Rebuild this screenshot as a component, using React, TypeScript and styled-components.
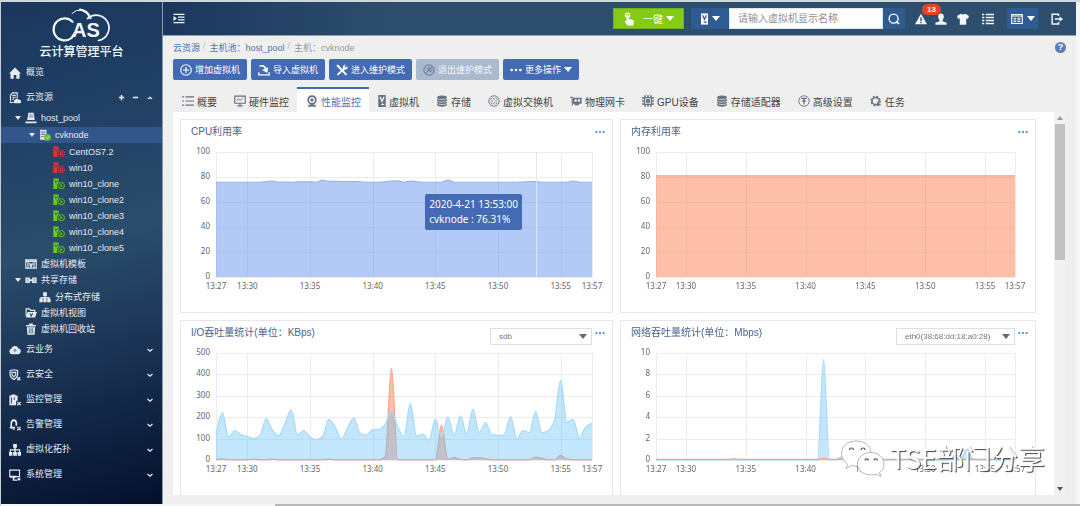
import React, { useLayoutEffect, useRef, useState } from "react";
import styled, { createGlobalStyle } from "styled-components";

const GlobalStyle = createGlobalStyle`
  * { box-sizing: border-box; }
  body {
    margin: 0;
    background: #f6f6f6;
    font-family: "Liberation Sans", "Noto Sans CJK SC", sans-serif;
    font-size: 9px;
    color: #444;
  }
  button, input, select { font-family: inherit; }
  a { text-decoration: none; color: inherit; }
  ul { list-style: none; margin: 0; padding: 0; }
`;

/* ---------- icons ---------- */

const Glyph = styled.svg<{ $w?: number; $h?: number }>`
  width: ${(p) => p.$w ?? 12}px;
  height: ${(p) => p.$h ?? p.$w ?? 12}px;
  flex: none;
  display: block;
`;

type IconName =
  | "home" | "resource" | "pool" | "host" | "template" | "storage" | "distributed" | "view" | "trash"
  | "cloud" | "shield" | "monitor" | "alarm" | "topology" | "system"
  | "collapse" | "touch" | "vm" | "search" | "warning" | "user" | "shirt" | "list" | "window" | "exit"
  | "plus" | "import" | "tools" | "forbid" | "dots"
  | "summary" | "hardware" | "camera" | "disk" | "vswitch" | "nic" | "gpu" | "advanced" | "task";

const line = { fill: "none", stroke: "currentColor", strokeWidth: 1.5 } as const;

const shapes: Record<IconName, React.ReactNode> = {
  home: <path fill="currentColor" d="M8 .5 16 8.600H14V15.500H9.800V10.500H6.200V15.500H2V8.600H0Z" />,
  resource: (
    <>
      <path {...line} d="M2 12.500V4L5 1.200H11V7.500M1 14H6M4.500 4.500H9M4.500 7H9M4.500 9.500H7" />
      <path fill="currentColor" d="M7.500 15A2.200 2.200 0 0 1 8 10.800A2.600 2.600 0 0 1 13 10.500A2.300 2.300 0 0 1 14.500 15Z" />
    </>
  ),
  pool: (
    <>
      <path fill="currentColor" d="M4.500 1H11.500L13 10.500H3ZM.500 12.500H15.500V15H.500Z" />
      <path stroke="#26486d" strokeWidth=".8" d="M5.500 4H10.500M5 6.500H11" />
    </>
  ),
  host: (
    <>
      <path fill="#d8e0e8" d="M1.500 1H10V14.500H1.500Z" />
      <path stroke="#46648c" strokeWidth="1.200" d="M3 4H8.500M3 7H8.500M3 10H6" />
      <circle cx="11.300" cy="11.300" r="4.500" fill="#6cc02a" />
      <path fill="none" stroke="#d9f2c4" strokeWidth="1.100" d="m9.300 11.300 1.500 1.500 2.500-3" />
    </>
  ),
  template: (
    <>
      <path {...line} d="M1 2.500H15V13.500H1ZM1 4.500H15M4 4.500V13M12 4.500V13" />
      <path {...line} strokeWidth="2" d="M6 7 8 11.500 10 7" />
    </>
  ),
  storage: (
    <>
      <path fill="currentColor" d="M.500 4.500H6.500V12H.500ZM9.500 4.500H15.500V12H9.500ZM6 7H10V9.500H6Z" />
      <path stroke="#4a6884" strokeWidth=".8" d="M2 7H5M11 7H14M2 9.500H5M11 9.500H14" />
    </>
  ),
  distributed: (
    <path fill="currentColor" d="M5.500 1.500H10.500V6.500H8.800V8H14V10H15.500V15H11V10H12V9.500H8.800V10H10.200V15H5.800V10H7.200V9.500H4V10H5V15H.500V10H2V8H7.200V6.500H5.500Z" />
  ),
  view: (
    <>
      <path {...line} d="M1.500 12V2.500H6L7.500 4.500H13V6.500" />
      <path fill="currentColor" d="M3.500 6.500H15.800L13.500 14H1.200Z" />
      <path fill="none" stroke="#27476a" strokeWidth="1.500" d="m6.500 8.500 1.700 3.500 2-3.500" />
    </>
  ),
  trash: (
    <>
      <path fill="currentColor" d="M5.500.500H10.500V2.500H14.500V4.500H1.500V2.500H5.500ZM2.500 5.500H13.500L12.800 15.500H3.200Z" />
      <path stroke="#27476a" d="M5.700 7V14M8 7V14M10.300 7V14" />
    </>
  ),
  cloud: (
    <>
      <path fill="currentColor" d="M3.800 13.500A3.700 3.700 0 0 1 3 6.300A5 5 0 0 1 12.500 5.800A3.900 3.900 0 0 1 12.500 13.500Z" />
      <path stroke="#2a4768" strokeWidth="1" fill="none" d="M6 9 8 7 10 9M8 7.500V11" />
    </>
  ),
  shield: (
    <>
      <path {...line} d="M1.500 2 6.500 1 11.500 2V7.500Q11 11.500 6.500 14Q2 11.500 1.500 7.500Z" />
      <path {...line} d="M4 4.500H9V7.500L6.500 10.500L4 7.500ZM11 11 15 15M15 11 11 15" />
    </>
  ),
  monitor: (
    <>
      <path fill="currentColor" d="M.500 2H3.500V.500H8.500V2H11.500V9H9.500V15H.500Z" />
      <path stroke="#1c3152" strokeWidth="1.200" d="M3.200 4.500V13M7 4.500V8" />
      <path {...line} d="m11 10.500 4.500 4.500M15.500 10.500 11 15" />
    </>
  ),
  alarm: (
    <>
      <path {...line} strokeWidth="2.200" d="M3 11V5.500Q3.500 1.800 6.500 1.500Q9.500 1.800 9.800 5.500V9M1 11.500H8" />
      <path {...line} d="M5 13.500H7.500M11 10.500 15.500 15M15.500 10.500 11 15" />
    </>
  ),
  topology: (
    <path fill="currentColor" d="M5.500 0H10.500V5H9V7H15V10.500H16V15.500H11.500V10.500H13.500V8.500H9V10.500H10.500V15.500H5.500V10.500H7V8.500H2.500V10.500H4.500V15.500H0V10.500H1V7H7V5H5.500Z" />
  ),
  system: (
    <>
      <path {...line} d="M1 1.500H14V10H1Z" />
      <path fill="currentColor" d="M1 9H10V11.500H7V14H11V15.500H5V11.500H1Z" />
      <path {...line} d="m11.500 11.500 3.500 3.500M15 11.500 11.500 15" />
    </>
  ),
  collapse: (
    <>
      <path stroke="currentColor" strokeWidth="2" d="M0 2H16M6.500 6H16M6.500 10H16M0 14H16" />
      <path fill="currentColor" d="M0 4.500 5 8 0 11.500Z" />
    </>
  ),
  touch: (
    <>
      <circle cx="5.500" cy="3.500" r="2.600" {...line} />
      <path fill="currentColor" d="M4.300 3.500Q5.500 2.300 6.700 3.500V8L12 9Q13.500 9.500 13.300 11L12.500 16H5.500L2 10.800Q2.300 9.500 4.300 10.800Z" />
    </>
  ),
  vm: (
    <>
      <path fill="currentColor" d="M3 0H13V16H3Z" />
      <path fill="none" stroke="var(--hole, #2f5b93)" strokeWidth="1.800" d="M5.300 2.500 8 8.500 10.700 2.500" />
      <path stroke="var(--hole, #2f5b93)" strokeWidth="1.800" d="M7 12.500H11" />
    </>
  ),
  search: (
    <>
      <circle cx="7.500" cy="7.500" r="6" {...line} strokeWidth="1.800" />
      <path {...line} strokeWidth="2.200" d="m10.500 11.500 4.500 3" />
    </>
  ),
  warning: (
    <>
      <path fill="currentColor" d="M8 1 16 15H0Z" />
      <path stroke="#2d4f6d" strokeWidth="1.800" d="M8 5.500V10.500M8 11.700V13.500" />
    </>
  ),
  user: (
    <path fill="currentColor" d="M8 .500Q12 .700 11.800 5Q11.500 8 10 9.500V11L15.500 13V15.500H.500V13L6 11V9.500Q4.500 8 4.200 5Q4 .700 8 .500Z" />
  ),
  shirt: <path fill="currentColor" d="M5 1Q8 3 11 1L16 4 14.500 8 12.300 7V15.500H3.700V7L1.500 8 0 4Z" />,
  list: (
    <path stroke="currentColor" strokeWidth="1.900" d="M0 2H3M5 2H16M0 6H3M5 6H16M0 10H3M5 10H16M0 14H3M5 14H16" />
  ),
  window: (
    <>
      <path {...line} d="M1 2H15V14H1ZM1 4H15" />
      <path stroke="currentColor" strokeWidth="1.300" d="M3.500 7H7M3.500 9.200H7M3.500 11.400H7M8.500 7H12.500M8.500 9.200H12.500M8.500 11.400H12.500" />
    </>
  ),
  exit: (
    <>
      <path {...line} strokeWidth="2" d="M10 4V1.500H1.500V14.500H10V12" />
      <path {...line} strokeWidth="2" d="M5 8H13" />
      <path fill="currentColor" d="M11.500 4.500 16 8 11.500 11.500Z" />
    </>
  ),
  plus: (
    <>
      <circle cx="8" cy="8" r="7" {...line} />
      <path {...line} d="M8 4V12M4 8H12" />
    </>
  ),
  import: (
    <>
      <path {...line} strokeWidth="1.800" d="M1 11V14.500H15V11" />
      <path {...line} strokeWidth="2.200" d="M2 3Q8 .500 10.500 7" />
      <path fill="currentColor" d="M5.500 8 13.500 4 12.500 12Z" />
    </>
  ),
  tools: (
    <>
      <path {...line} strokeWidth="2.600" d="M2 2 14 14.500M11 6 2 14.500" />
      <path fill="currentColor" d="M10 1.500 13 .500 11.500 3.500 13 4.500 15.500 2.500 15 6.500 11 7.500 9 5ZM.500 1.500 2.500 .500 5.500 4 3.500 5.500Z" />
    </>
  ),
  forbid: (
    <>
      <circle cx="8" cy="8" r="6.800" {...line} strokeWidth="1.800" />
      <path {...line} strokeWidth="1.800" d="M13 3 3 13M5 5.500 11 11M8 3V6M10.500 8H13" />
    </>
  ),
  dots: (
    <g fill="currentColor">
      <circle cx="2.200" cy="8" r="1.800" />
      <circle cx="8" cy="8" r="1.800" />
      <circle cx="13.800" cy="8" r="1.800" />
    </g>
  ),
  summary: <path stroke="currentColor" strokeWidth="1.400" d="M0 2.500H2.500M4.500 2.500H16M0 8H2.500M4.500 8H16M0 13.500H2.500M4.500 13.500H16" />,
  hardware: (
    <>
      <path {...line} d="M1 1.500H15V11H1ZM8 11V14.500M4.500 14.500H11.500" />
      <path {...line} strokeWidth="1.200" d="m3.500 7 2.500-2 2 2.500 4-4" />
    </>
  ),
  camera: (
    <>
      <circle cx="8" cy="6.500" r="5.100" fill="none" stroke="currentColor" strokeWidth="2.400" />
      <circle cx="8" cy="6.500" r="2.200" fill="currentColor" />
      <path fill="currentColor" d="M6 11H10V13H13V15.500H3V13H6Z" />
    </>
  ),
  disk: (
    <>
      <path fill="currentColor" d="M1.500 3.200Q1.500 .500 8 .500T14.500 3.200V12.800Q14.500 15.500 8 15.500T1.500 12.800Z" />
      <path fill="none" stroke="#efefef" strokeWidth=".9" d="M1.500 4.500Q3 6 8 6T14.500 4.500M1.500 8Q3 9.500 8 9.500T14.500 8M1.500 11.200Q3 12.700 8 12.700T14.500 11.200" />
    </>
  ),
  vswitch: (
    <>
      <circle cx="8" cy="8" r="7" {...line} strokeWidth="1.200" />
      <path {...line} strokeWidth="1.300" d="M3.500 6 6 3.500M10 3.500 12.500 6M3.500 10 6 12.500M10 12.500 12.500 10M4 8H6.500M9.500 8H12M8 4V6.500M8 9.500V12" />
    </>
  ),
  nic: (
    <>
      <path {...line} d="M0 3H3V14" />
      <path fill="currentColor" d="M4 3.500H15.500V11.500H12V13.500H6V11.500H4Z" />
      <path fill="#efefef" d="M6 5.500H9V9H6ZM10.500 5.500H13.500V9H10.500Z" />
    </>
  ),
  gpu: (
    <>
      <path stroke="currentColor" strokeWidth="1.800" d="M4 0V16M8 0V16M12 0V16M0 4H16M0 8H16M0 12H16" />
      <path {...line} fill="#efefef" d="M3.500 3.500H12.500V12.500H3.500Z" />
      <path fill="currentColor" d="M5.500 5.500H10.500V10.500H5.500Z" />
    </>
  ),
  advanced: (
    <>
      <circle cx="8" cy="8" r="7" {...line} strokeWidth="1.200" />
      <path {...line} d="M4.500 4.500H11.500M8 12.500V6" />
      <path fill="currentColor" d="M8 5 11 9H5Z" />
    </>
  ),
  task: (
    <>
      <circle cx="7.500" cy="8" r="4.800" fill="none" stroke="currentColor" strokeWidth="2" />
      <circle cx="7.500" cy="8" r="6.200" fill="none" stroke="currentColor" strokeWidth="1.600" strokeDasharray="2.800 2.070" />
      <path fill="currentColor" d="M9 8.500 15.500 13.500 12 13.500 10.500 16Z" />
    </>
  ),
};

const Icon = ({ name, w, h }: { name: IconName; w?: number; h?: number }) => (
  <Glyph viewBox={name === "vm" ? "3 0 10 16" : "0 0 16 16"} $w={w} $h={h} aria-hidden="true">
    {shapes[name]}
  </Glyph>
);

const VmIcon = ({ running }: { running: boolean }) => {
  const c = running ? "#62cf22" : "#e8303c";
  return (
    <Glyph viewBox="0 0 16 16" aria-hidden="true">
      <path fill={c} d="M.500 .500H7.500V6L5.500 8.500V14.500H.500Z" />
      <path fill="none" stroke="#26486d" d="M2.500 3 4 6.500 5.700 3" />
      <circle cx="11.200" cy="10.200" r="4.100" fill="none" stroke={c} strokeWidth="1.300" />
      {running ? <path fill={c} d="m9.900 8 3.300 2.200-3.300 2.200Z" /> : <path fill={c} d="M9.400 8.400H13V12H9.400Z" />}
    </Glyph>
  );
};

const Caret = styled.span<{ $size?: number }>`
  flex: none;
  width: 0;
  height: 0;
  border: ${(p) => p.$size ?? 4}px solid transparent;
  border-top-color: currentColor;
  border-top-width: ${(p) => (p.$size ?? 4) + 1}px;
  border-bottom: 0;
`;

/* ---------- shell ---------- */

const Shell = styled.div`
  position: relative;
  height: 100vh;
  display: flex;
  flex-direction: column;
  overflow: hidden;
  border-top: 2px solid #cdd7dd;
  border-left: 1px solid #c5ccd6;
`;

const Frame = styled.div`
  flex: 1;
  min-height: 0;
  display: flex;
  margin-right: 4px;
`;

const BottomEdge = styled.div`
  height: 2px;
  margin-left: 274px;
  background: #b9b9b9;
`;

const Sidebar = styled.aside`
  width: 162px;
  flex: none;
  overflow: hidden;
  color: #e6ebf2;
  border-right: 1px solid #8a9bb0;
  background: linear-gradient(165deg, #1b375e 0%, #1f3e63 20%, #2a4d6c 48%, #1c3557 68%, #03102c 100%);
`;

const Brand = styled.div`
  height: 58px;
  display: flex;
  flex-direction: column;
  align-items: center;
  padding-top: 6px;
  color: #f4f7fb;
  font-size: 12px;
  font-weight: 500;
  line-height: 16px;
`;

const MenuRow = styled.div`
  height: 25px;
  display: flex;
  align-items: center;
  padding: 0 8px;
  gap: 5px;
`;

const MenuLink = styled.a`
  flex: 1;
  display: flex;
  align-items: center;
  gap: 5px;
  line-height: 13px;
`;

const TreeTool = styled.button`
  width: 9px;
  height: 12px;
  border: 0;
  padding: 0;
  background: none;
  color: inherit;
  display: flex;
  align-items: center;
  justify-content: center;
`;

const Tree = styled.ul`
  & ul { padding-top: 1px; }
`;

const TreeLink = styled.a<{ $depth: number; $active?: boolean }>`
  height: 16px;
  display: flex;
  align-items: center;
  gap: 3px;
  padding-left: ${(p) => 13 + p.$depth * 14}px;
  background: ${(p) => (p.$active ? "#33568a" : "transparent")};
`;

const TreeLabel = styled.span`
  padding-left: 1px;
  line-height: 14px;
`;

const Twist = styled.span`
  width: 8px;
  display: flex;
  justify-content: center;
`;

const Chevron = ({ up }: { up?: boolean }) => (
  <Glyph viewBox="0 0 8 8" $w={8} aria-hidden="true">
    <path fill="none" stroke="currentColor" strokeWidth="1.200" d={up ? "M2 5 4 3.200 6 5" : "M1.500 3 4 5.200 6.500 3"} />
  </Glyph>
);

type Node = {
  label: string;
  icon: React.ReactNode;
  active?: boolean;
  children?: Node[];
};

const vm = (label: string, running: boolean): Node => ({ label, icon: <VmIcon running={running} /> });

const tree: Node[] = [
  {
    label: "host_pool",
    icon: <Icon name="pool" />,
    children: [
      {
        label: "cvknode",
        icon: <Icon name="host" />,
        active: true,
        children: [
          vm("CentOS7.2", false),
          vm("win10", false),
          vm("win10_clone", true),
          vm("win10_clone2", true),
          vm("win10_clone3", true),
          vm("win10_clone4", true),
          vm("win10_clone5", true),
        ],
      },
    ],
  },
  { label: "虚拟机模板", icon: <Icon name="template" /> },
  {
    label: "共享存储",
    icon: <Icon name="storage" />,
    children: [{ label: "分布式存储", icon: <Icon name="distributed" /> }],
  },
  { label: "虚拟机视图", icon: <Icon name="view" /> },
  { label: "虚拟机回收站", icon: <Icon name="trash" /> },
];

const TreeBranch = ({ nodes, depth = 0 }: { nodes: Node[]; depth?: number }) => (
  <>
    {nodes.map((n) => (
      <li key={n.label}>
        <TreeLink href="#" $depth={depth} $active={n.active}>
          <Twist>{n.children && <Caret $size={3} />}</Twist>
          {n.icon}
          <TreeLabel>{n.label}</TreeLabel>
        </TreeLink>
        {n.children && (
          <ul>
            <TreeBranch nodes={n.children} depth={depth + 1} />
          </ul>
        )}
      </li>
    ))}
  </>
);

const lowerMenu: { label: string; icon: IconName }[] = [
  { label: "云业务", icon: "cloud" },
  { label: "云安全", icon: "shield" },
  { label: "监控管理", icon: "monitor" },
  { label: "告警管理", icon: "alarm" },
  { label: "虚拟化拓扑", icon: "topology" },
  { label: "系统管理", icon: "system" },
];

const Logo = () => (
  <svg width="60" height="36" viewBox="0 0 60 36" aria-label="CAS">
    <g fill="none" stroke="#f4f7fb" strokeLinecap="round">
      <path strokeWidth="2.200" d="M20.500 13.800A11 11 0 1 0 19.500 30L23 25" />
      <path strokeWidth="1" d="M20 5.500Q29-3.500 38.500 10" />
      <path strokeWidth="2.200" d="M28 1.500Q35.500 2.500 38.500 10" />
      <path strokeWidth="1.700" d="M35.500 10.500A12.800 12.800 0 1 1 46.500 32.500" />
    </g>
    <text x="20" y="29" fill="#f4f7fb" fontFamily="Liberation Sans, sans-serif" fontWeight="700" fontSize="20">AS</text>
  </svg>
);

/* ---------- header ---------- */

const Body = styled.div`
  flex: 1;
  min-width: 0;
  display: flex;
  flex-direction: column;
`;

const Header = styled.header`
  height: 34px;
  flex: none;
  display: flex;
  align-items: center;
  padding: 0 13px 0 10px;
  color: #f3f6fa;
  background: linear-gradient(90deg, #1b375e 0, #2d4f6d 240px, #2d4f6d 100%);
  border-bottom: 1px solid #8fa0b3;
`;

const Spacer = styled.div`
  flex: 1;
`;

const IconButton = styled.button`
  border: 0;
  padding: 0;
  background: none;
  color: inherit;
  display: flex;
`;

const QuickButton = styled.button`
  width: 71px;
  height: 21px;
  display: flex;
  align-items: center;
  gap: 3px;
  padding: 0 0 0 9px;
  margin-right: 7px;
  border: 1px solid #6fb21a;
  background: #85cb16;
  color: #fff;
  font-size: 10px;
`;

const QuickLabel = styled.span`
  padding-left: 4px;
`;

const Search = styled.form`
  display: flex;
  height: 21px;
  margin-right: 10px;
`;

const BlueButton = styled.button<{ $w: number }>`
  width: ${(p) => p.$w}px;
  height: 21px;
  display: flex;
  align-items: center;
  justify-content: center;
  gap: 4px;
  border: 0;
  padding: 0;
  background: #2f5b93;
  color: #fff;
`;

const SearchInput = styled.input`
  width: 154px;
  height: 21px;
  border: 1px solid #dfe5ec;
  border-radius: 0;
  padding: 0 8px;
  font-size: 10px;
  background: #fff;
  color: #444;
  outline: 0;
  &::placeholder { color: #8f8f8f; opacity: 1; }
`;

const Tools = styled.div`
  display: flex;
  align-items: center;
  gap: 13px;
`;

const AlertPair = styled.div`
  position: relative;
  display: flex;
  gap: 8px;
  margin-right: -3px;
`;

const Badge = styled.span`
  position: absolute;
  left: 7px;
  top: -9px;
  width: 19px;
  height: 11px;
  border-radius: 6px;
  background: #e8431f;
  color: #fff;
  font-size: 8px;
  font-weight: 700;
  line-height: 11px;
  text-align: center;
`;

/* ---------- page head ---------- */

const Page = styled.main`
  flex: 1;
  min-height: 0;
  display: flex;
  flex-direction: column;
  padding: 0 10px 9px;
  background: #efefef;
`;

const CrumbRow = styled.div`
  flex: none;
  height: 23px;
  display: flex;
  align-items: center;
  justify-content: space-between;
`;

const Crumbs = styled.nav`
  display: flex;
  gap: 3px;
  color: #999;
  a { color: #4a72b4; }
`;

const Slash = styled.span`
  color: #bbb;
  padding-right: 1px;
`;

const Help = styled.button`
  width: 11px;
  height: 11px;
  padding: 0;
  border: 0;
  border-radius: 50%;
  background: #5a7fb8;
  color: #fff;
  font-size: 9px;
  font-weight: 700;
  line-height: 11px;
`;

const Actions = styled.div`
  flex: none;
  display: flex;
  gap: 4px;
`;

const Action = styled.button`
  height: 21px;
  display: flex;
  align-items: center;
  gap: 3px;
  padding: 0 7px;
  border: 0;
  border-radius: 2px;
  background: #436ab4;
  color: #fff;
  font-size: 9px;
  white-space: nowrap;
  &:disabled {
    background: #abb9ce;
    color: #f4f6f9;
  }
  &:disabled svg { color: #78869a; }
`;

const Tabs = styled.div`
  flex: none;
  height: 25px;
  margin-top: 7px;
  display: flex;
`;

const Tab = styled.button<{ $active?: boolean }>`
  --hole: #efefef;
  display: flex;
  align-items: center;
  gap: 3px;
  padding: 1px 8px 0 9px;
  border: 0;
  border-top: 2px solid ${(p) => (p.$active ? "#436ab4" : "transparent")};
  background: ${(p) => (p.$active ? "#fff" : "transparent")};
  color: ${(p) => (p.$active ? "#4a72b8" : "#444")};
  font-size: 10px;
  white-space: nowrap;
  svg { color: #66727f; }
`;

/* ---------- panel ---------- */

const Panel = styled.div`
  flex: 1;
  min-height: 0;
  display: flex;
`;

const Scroller = styled.div`
  flex: 1;
  min-width: 0;
  overflow-y: auto;
  scrollbar-width: none;
  background: #fff;
  padding: 7px 18px 7px 7px;
`;

const Cards = styled.div`
  display: grid;
  grid-template-columns: minmax(0, 433fr) minmax(0, 416fr);
  gap: 7px;
`;

const Card = styled.section`
  position: relative;
  height: 194px;
  border: 1px solid #e8e8e8;
  background: #fff;
`;

const CardHead = styled.div`
  height: 24px;
  display: flex;
  align-items: center;
  padding-left: 10px;
`;

const CardTitle = styled.h2`
  flex: 1;
  margin: 0;
  font-size: 10px;
  font-weight: 400;
  line-height: 14px;
  color: #48648c;
`;

const MoreButton = styled.button`
  width: 20px;
  display: flex;
  padding: 0 0 0 3px;
  border: 0;
  background: none;
  color: #3f8edb;
`;

const SelectBox = styled.label<{ $w: number }>`
  align-self: flex-end;
  width: ${(p) => p.$w}px;
  height: 17px;
  display: flex;
  align-items: center;
  padding-right: 4px;
  border: 1px solid #dcdfe9;
  color: #5f6b78;
`;

const Select = styled.select`
  appearance: none;
  flex: 1;
  min-width: 0;
  height: 15px;
  border: 0;
  padding: 0 0 0 8px;
  background: none;
  color: #777;
  font-size: 8px;
  outline: 0;
`;

const ScrollTrack = styled.div`
  width: 12px;
  flex: none;
  display: flex;
  flex-direction: column;
  align-items: center;
  padding: 4px 0;
  background: #f1f1f1;
  color: #555;
`;

const Thumb = styled.div`
  width: 10px;
  height: 136px;
  margin: 4px 0 auto;
  background: #c1c1c1;
`;

const ArrowUp = styled.span`
  border: 3px solid transparent;
  border-top: 0;
  border-bottom: 4px solid #999;
`;

/* ---------- charts ---------- */

const ChartBox = styled.div`
  svg { display: block; }
`;

const Tip = styled.div`
  position: absolute;
  right: 90px;
  top: 74px;
  padding: 3px 4px;
  border-radius: 2px;
  background: #436ab3;
  color: #fff;
  font-family: "Noto Sans", sans-serif;
  font-size: 10px;
  line-height: 15px;
  white-space: nowrap;
`;

type Series = { data: number[]; stroke: string; fill: string };

/** Monotone cubic path through evenly spaced points. */
function curve(pts: [number, number][]): string {
  const n = pts.length;
  if (n < 2) return "";
  const slope = pts.slice(1).map((p, i) => (p[1] - pts[i][1]) / (p[0] - pts[i][0]));
  const tangent = pts.map((_, i) => {
    if (i === 0) return slope[0];
    if (i === n - 1) return slope[n - 2];
    const a = slope[i - 1];
    const b = slope[i];
    return a * b <= 0 ? 0 : (2 * a * b) / (a + b);
  });
  let d = `M${pts[0][0]} ${pts[0][1]}`;
  for (let i = 1; i < n; i++) {
    const h = (pts[i][0] - pts[i - 1][0]) / 3;
    d += `C${pts[i - 1][0] + h} ${pts[i - 1][1] + tangent[i - 1] * h} ${pts[i][0] - h} ${pts[i][1] - tangent[i] * h} ${pts[i][0]} ${pts[i][1]}`;
  }
  return d;
}

const marks: [string, number][] = [
  ["13:27", 0], ["13:30", 5], ["13:35", 15], ["13:40", 25],
  ["13:45", 35], ["13:50", 45], ["13:55", 55], ["13:57", 60],
];

const Chart = ({ max, steps, plotHeight, series, pointer }: {
  max: number; steps: number; plotHeight: number; series: Series[]; pointer?: number;
}) => {
  const box = useRef<HTMLDivElement>(null);
  const [width, setWidth] = useState(0);
  useLayoutEffect(() => {
    const el = box.current;
    if (!el) return;
    const update = () => setWidth(el.clientWidth);
    update();
    const ro = new ResizeObserver(update);
    ro.observe(el);
    return () => ro.disconnect();
  }, []);

  const left = 35;
  const top = 8;
  const w = Math.max(width - left - 20, 0);
  const bottom = top + plotHeight;
  const x = (i: number) => left + (w * i) / 60;
  const y = (v: number) => bottom - (v / max) * plotHeight;
  const grid = (v: number) => Math.round(v) + 0.5;

  return (
    <ChartBox ref={box}>
      {w > 0 && (
        <svg width={width} height={bottom + 18} fontFamily="Noto Sans, sans-serif" fontSize="8" fill="#666">
          <g stroke="#ececec">
            {Array.from({ length: steps + 1 }, (_, k) => {
              const gy = grid(y((max / steps) * k));
              return <line key={k} x1={left} x2={left + w} y1={gy} y2={gy} />;
            })}
            {marks.map(([t, i]) => (
              <line key={t} x1={grid(x(i))} x2={grid(x(i))} y1={top} y2={bottom} />
            ))}
          </g>
          {series.map((s, k) => {
            const d = curve(s.data.map((v, i) => [x(i), y(v)]));
            return (
              <g key={k}>
                <path d={`${d}L${left + w} ${bottom}L${left} ${bottom}Z`} fill={s.fill} />
                <path d={d} fill="none" stroke={s.stroke} strokeWidth="1.200" />
              </g>
            );
          })}
          {pointer !== undefined && (
            <line x1={grid(x(pointer))} x2={grid(x(pointer))} y1={top} y2={bottom} stroke="#dfe6f5" />
          )}
          {Array.from({ length: steps + 1 }, (_, k) => (
            <text key={k} x={left - 6} y={y((max / steps) * k) + 2} textAnchor="end">
              {(max / steps) * k}
            </text>
          ))}
          {marks.map(([t, i]) => (
            <text key={t} x={x(i)} y={bottom + 12} textAnchor="middle">{t}</text>
          ))}
        </svg>
      )}
    </ChartBox>
  );
};

const fillWith = (base: number, points: Record<number, number>) =>
  Array.from({ length: 61 }, (_, i) => points[i] ?? base);

const cpu = fillWith(75.8, {
  8: 76.3, 9: 76.8, 11: 76, 13: 76, 14: 76.1, 15: 76.1, 17: 77.5, 18: 76.5, 19: 76.6, 20: 76.4, 21: 76.4, 22: 76.3, 23: 76.2,
  27: 76.1, 28: 76.8, 29: 77, 31: 76.8, 32: 76.1, 37: 77.6, 49: 76, 50: 76.2, 51: 76.3, 57: 76.8,
});
const memory = fillWith(81, {});
const ioRead = [
  120, 222, 108, 137, 118, 110, 100, 112, 193, 140, 112, 170, 234, 118, 137, 108, 95, 110, 190, 155, 98,
  150, 196, 125, 117, 142, 142, 168, 228, 155, 108, 265, 112, 120, 92, 190, 108, 200, 115, 206, 123,
  238, 130, 172, 120, 115, 118, 203, 100, 137, 128, 226, 128, 137, 185, 373, 175, 190, 103, 155, 172,
];
const ioWrite = fillWith(1, {
  1: 5, 6: 4, 9: 4, 18: 4, 27: 15, 28: 430, 36: 163, 37: 4, 38: 12, 39: 3, 41: 10, 42: 11, 43: 6,
  51: 13, 52: 8, 55: 22, 56: 5,
});
const netIn = fillWith(0.02, { 28: 9.4, 31: 0.3, 32: 0.05, 50: 0.5, 51: 0.2, 52: 1, 53: 0.1 });
const netOut = fillWith(0.06, { 13: 0.1, 28: 0.15, 31: 0.1 });

const blueFill = "rgba(110,195,248,.42)";
const coral = "#fba283";

const tabs: { label: string; icon: IconName; w?: number }[] = [
  { label: "概要", icon: "summary" },
  { label: "硬件监控", icon: "hardware" },
  { label: "性能监控", icon: "camera" },
  { label: "虚拟机", icon: "vm", w: 8 },
  { label: "存储", icon: "disk" },
  { label: "虚拟交换机", icon: "vswitch" },
  { label: "物理网卡", icon: "nic" },
  { label: "GPU设备", icon: "gpu" },
  { label: "存储适配器", icon: "disk" },
  { label: "高级设置", icon: "advanced" },
  { label: "任务", icon: "task" },
];

const ChartCard = ({ title, select, children }: {
  title: string; select?: { label: string; width: number; name: string }; children: React.ReactNode;
}) => (
  <Card>
    <CardHead>
      <CardTitle>{title}</CardTitle>
      {select && (
        <SelectBox $w={select.width}>
          <Select aria-label={select.name}>
            <option>{select.label}</option>
          </Select>
          <Caret />
        </SelectBox>
      )}
      <MoreButton aria-label="更多">
        <Icon name="dots" w={10} />
      </MoreButton>
    </CardHead>
    {children}
  </Card>
);

/* ---------- watermark ---------- */

const Watermark = styled.div`
  position: absolute;
  right: 35px;
  bottom: 29px;
  display: flex;
  align-items: center;
  gap: 5px;
  color: #fff;
  font-family: "Noto Sans CJK SC", sans-serif;
  font-size: 27px;
  line-height: 38px;
  text-shadow: 1px 1px 1px #444;
  pointer-events: none;
`;

const Bubbles = () => (
  <svg width="45" height="38" viewBox="0 0 45 38" aria-hidden="true">
    <g fill="#fff" stroke="#999" strokeWidth=".7">
      <path d="M16 2C7.500 2 1.500 7.500 1.500 14.500C1.500 19 4 22.500 7.500 25L6 29.500L11.500 26.500Q15 27.500 18 27C30 26 32 19 31 13C30 6 24 2 16 2Z" />
      <path d="M31 13.500C23 13.500 17.500 18.500 17.500 25C17.500 31.500 23.500 36 31 36Q34 36 36 35L41 37.500L39.500 33.500C42.500 31.500 44 28.500 44 25C44 18.500 38 13.500 31 13.500Z" />
    </g>
    <g fill="none" stroke="#555" strokeWidth="1.200">
      <path d="M9.500 11a2 2 0 0 1 4 0M21 11a2 2 0 0 1 4 0M25 21.500a1.700 1.700 0 0 1 3.400 0M34 21.500a1.700 1.700 0 0 1 3.400 0" />
    </g>
  </svg>
);

export default function App() {
  return (
    <Shell>
      <GlobalStyle />
      <Frame>
        <Sidebar>
          <Brand>
            <Logo />
            云计算管理平台
          </Brand>
          <nav>
            <MenuRow>
              <MenuLink href="#"><Icon name="home" />概览</MenuLink>
            </MenuRow>
            <MenuRow>
              <MenuLink href="#"><Icon name="resource" />云资源</MenuLink>
              <TreeTool aria-label="增加">
                <Glyph viewBox="0 0 8 8" $w={7}><path stroke="currentColor" strokeWidth="1.800" d="M4 1V7M1 4H7" /></Glyph>
              </TreeTool>
              <TreeTool aria-label="删除">
                <Glyph viewBox="0 0 8 8" $w={7}><path stroke="currentColor" strokeWidth="1.800" d="M1 4H7" /></Glyph>
              </TreeTool>
              <TreeTool aria-label="收起"><Chevron up /></TreeTool>
            </MenuRow>
            <Tree>
              <TreeBranch nodes={tree} />
            </Tree>
            {lowerMenu.map((m) => (
              <MenuRow key={m.label}>
                <MenuLink href="#"><Icon name={m.icon} />{m.label}</MenuLink>
                <TreeTool aria-label="展开"><Chevron /></TreeTool>
              </MenuRow>
            ))}
          </nav>
        </Sidebar>
        <Body>
          <Header>
            <IconButton aria-label="折叠菜单"><Icon name="collapse" w={12} h={11} /></IconButton>
            <Spacer />
            <QuickButton>
              <Icon name="touch" w={13} h={14} />
              <QuickLabel>一键</QuickLabel>
              <Caret />
            </QuickButton>
            <Search onSubmit={(e) => e.preventDefault()}>
              <BlueButton type="button" $w={38} aria-label="搜索类型">
                <Icon name="vm" w={7} h={12} />
                <Caret />
              </BlueButton>
              <SearchInput placeholder="请输入虚拟机显示名称" aria-label="虚拟机显示名称" />
              <BlueButton $w={22} aria-label="搜索"><Icon name="search" w={12} /></BlueButton>
            </Search>
            <Tools>
              <AlertPair>
                <IconButton aria-label="告警"><Icon name="warning" w={12} /></IconButton>
                <Badge>13</Badge>
                <IconButton aria-label="用户"><Icon name="user" w={12} /></IconButton>
              </AlertPair>
              <IconButton aria-label="皮肤"><Icon name="shirt" w={12} /></IconButton>
              <IconButton aria-label="任务列表"><Icon name="list" w={12} /></IconButton>
              <BlueButton $w={31} aria-label="窗口">
                <Icon name="window" w={12} />
                <Caret />
              </BlueButton>
              <IconButton aria-label="退出"><Icon name="exit" w={12} /></IconButton>
            </Tools>
          </Header>
          <Page>
            <CrumbRow>
              <Crumbs>
                <a href="#">云资源</a>
                <Slash>/</Slash>
                <a href="#">主机池：host_pool</a>
                <Slash>/</Slash>
                <span>主机：cvknode</span>
              </Crumbs>
              <Help aria-label="帮助">?</Help>
            </CrumbRow>
            <Actions>
              <Action><Icon name="plus" />增加虚拟机</Action>
              <Action><Icon name="import" />导入虚拟机</Action>
              <Action><Icon name="tools" />进入维护模式</Action>
              <Action disabled><Icon name="forbid" />退出维护模式</Action>
              <Action><Icon name="dots" />更多操作<Caret /></Action>
            </Actions>
            <Tabs role="tablist">
              {tabs.map((t) => (
                <Tab key={t.label} role="tab" $active={t.label === "性能监控"} aria-selected={t.label === "性能监控"}>
                  <Icon name={t.icon} w={t.w ?? 12} h={12} />
                  {t.label}
                </Tab>
              ))}
            </Tabs>
            <Panel>
              <Scroller>
                <Cards>
                  <ChartCard title="CPU利用率">
                    <Chart max={100} steps={5} plotHeight={125} pointer={51}
                      series={[{ data: cpu, stroke: "#93b3f0", fill: "rgba(103,149,238,.5)" }]} />
                    <Tip>
                      2020-4-21 13:53:00<br />cvknode : 76.31%
                    </Tip>
                  </ChartCard>
                  <ChartCard title="内存利用率">
                    <Chart max={100} steps={5} plotHeight={125}
                      series={[{ data: memory, stroke: coral, fill: "rgba(252,128,82,.5)" }]} />
                  </ChartCard>
                  <ChartCard title="I/O吞吐量统计(单位：KBps)" select={{ label: "sdb", width: 102, name: "磁盘" }}>
                    <Chart max={500} steps={5} plotHeight={107}
                      series={[
                        { data: ioWrite, stroke: coral, fill: "rgba(252,128,82,.5)" },
                        { data: ioRead, stroke: "#a6dafa", fill: blueFill },
                      ]} />
                  </ChartCard>
                  <ChartCard title="网络吞吐量统计(单位：Mbps)" select={{ label: "eth0(38:68:dd:18:a0:28)", width: 119, name: "网卡" }}>
                    <Chart max={10} steps={5} plotHeight={107}
                      series={[
                        { data: netIn, stroke: "#a6dafa", fill: blueFill },
                        { data: netOut, stroke: coral, fill: "rgba(252,128,82,.3)" },
                      ]} />
                  </ChartCard>
                </Cards>
              </Scroller>
              <ScrollTrack>
                <ArrowUp />
                <Thumb />
                <Caret $size={3} />
              </ScrollTrack>
            </Panel>
          </Page>
        </Body>
      </Frame>
      <BottomEdge />
      <Watermark>
        <Bubbles />
        TSE部门分享
      </Watermark>
    </Shell>
  );
}
